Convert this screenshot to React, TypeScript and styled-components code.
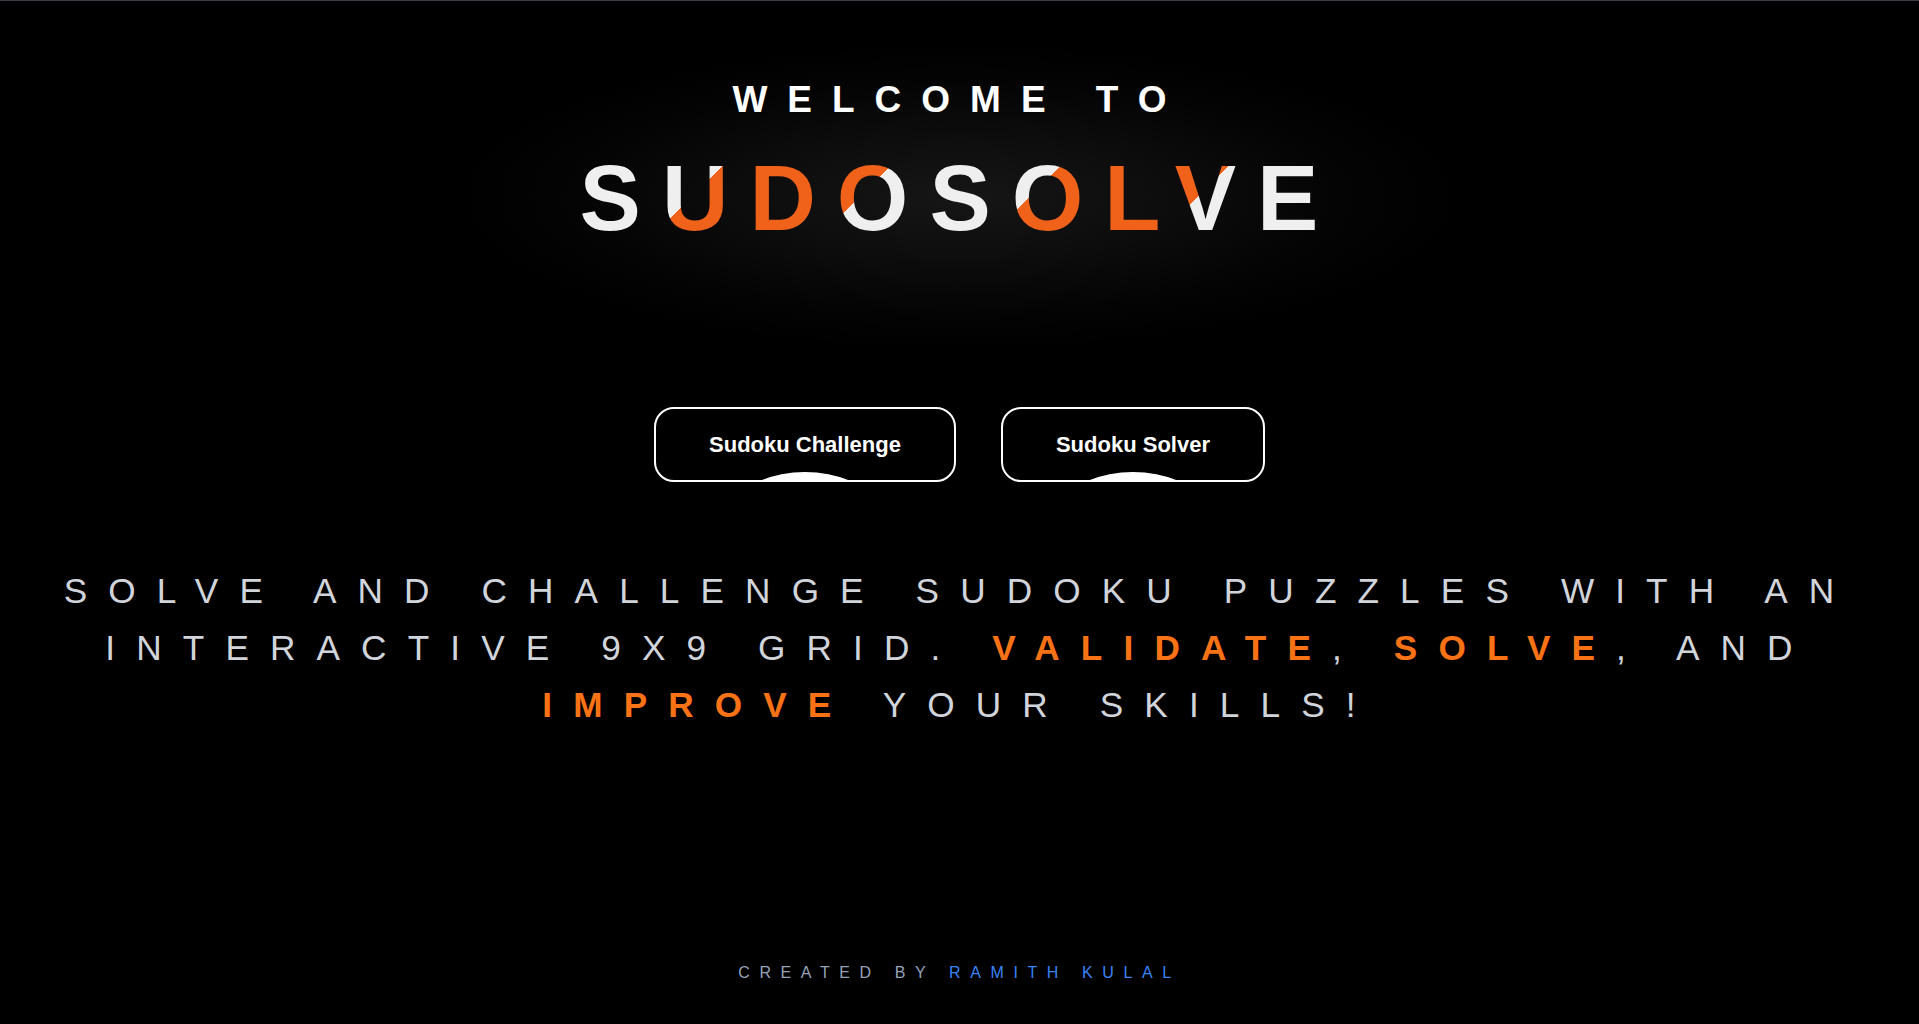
import React from "react";
import styled, { createGlobalStyle } from "styled-components";

const GlobalStyle = createGlobalStyle`
  html, body {
    margin: 0;
    padding: 0;
    background: #000;
  }
  body {
    font-family: "Liberation Sans", Arial, sans-serif;
  }
  * { box-sizing: border-box; }
`;

const Page = styled.div`
  min-height: 100vh;
  border-top: 1px solid #3b3f46;
  background: #000;
  display: flex;
  flex-direction: column;
  align-items: center;
`;

const Hero = styled.header`
  width: 100%;
  display: flex;
  flex-direction: column;
  align-items: center;
  padding: 80px 0 100px;
  background: radial-gradient(
    ellipse 510px 155px at 50% 196px,
    rgba(255, 255, 255, 0.085) 0%,
    rgba(255, 255, 255, 0.05) 40%,
    rgba(255, 255, 255, 0.015) 75%,
    rgba(255, 255, 255, 0) 100%
  );
`;

const Welcome = styled.h2`
  margin: 0;
  font-size: 37px;
  line-height: 37px;
  font-weight: 700;
  letter-spacing: 20px;
  color: #ffffff;
`;

const Title = styled.h1`
  margin: 34px 0 0;
  display: inline-block;
  font-size: 92px;
  line-height: 92px;
  font-weight: 700;
  letter-spacing: 21px;
  color: transparent;
  background-image: linear-gradient(
    135deg,
    #efefef 0px,
    #efefef 628px,
    #f0621a 628px,
    #f0621a 747px,
    #efefef 747px,
    #efefef 867px,
    #f0621a 867px,
    #f0621a 986px,
    #efefef 986px,
    #efefef 100%
  );
  background-attachment: fixed;
  -webkit-background-clip: text;
  background-clip: text;
`;

const ButtonRow = styled.nav`
  display: flex;
  gap: 45px;
  margin-top: 63px;
`;

const ActionButton = styled.button`
  position: relative;
  overflow: hidden;
  height: 75px;
  padding: 0 53px;
  border: 2px solid #ffffff;
  border-radius: 20px;
  background: #000;
  color: #ffffff;
  font-family: "Liberation Sans", Arial, sans-serif;
  font-size: 22px;
  font-weight: 700;
  cursor: pointer;

  &::before {
    content: "";
    position: absolute;
    left: 50%;
    top: calc(100% - 8px);
    width: 240px;
    height: 240px;
    margin-left: -120px;
    border-radius: 50%;
    background: #ffffff;
  }
`;

const Description = styled.p`
  margin: 80px 0 0;
  width: 100%;
  padding: 0 40px;
  text-align: center;
  font-size: 35.2px;
  line-height: 57px;
  letter-spacing: 0.6em;
  color: #d1d5db;
  font-weight: 400;
`;

const Highlight = styled.span`
  color: #f97316;
  font-weight: 700;
`;

const Footer = styled.footer`
  margin-top: auto;
  padding-bottom: 42px;
  font-size: 16px;
  line-height: 18px;
  letter-spacing: 0.6em;
  color: #94a3b8;
`;

const Author = styled.span`
  color: #3b82f6;
`;

export default function App() {
  return (
    <>
      <GlobalStyle />
      <Page>
        <Hero>
          <Welcome>WELCOME TO</Welcome>
          <Title>SUDOSOLVE</Title>
        </Hero>
        <ButtonRow>
          <ActionButton>Sudoku Challenge</ActionButton>
          <ActionButton>Sudoku Solver</ActionButton>
        </ButtonRow>
        <Description>
          SOLVE AND CHALLENGE SUDOKU PUZZLES WITH AN INTERACTIVE 9X9 GRID.{" "}
          <Highlight>VALIDATE</Highlight>, <Highlight>SOLVE</Highlight>, AND{" "}
          <Highlight>IMPROVE</Highlight> YOUR SKILLS!
        </Description>
        <Footer>
          CREATED BY <Author>RAMITH KULAL</Author>
        </Footer>
      </Page>
    </>
  );
}
